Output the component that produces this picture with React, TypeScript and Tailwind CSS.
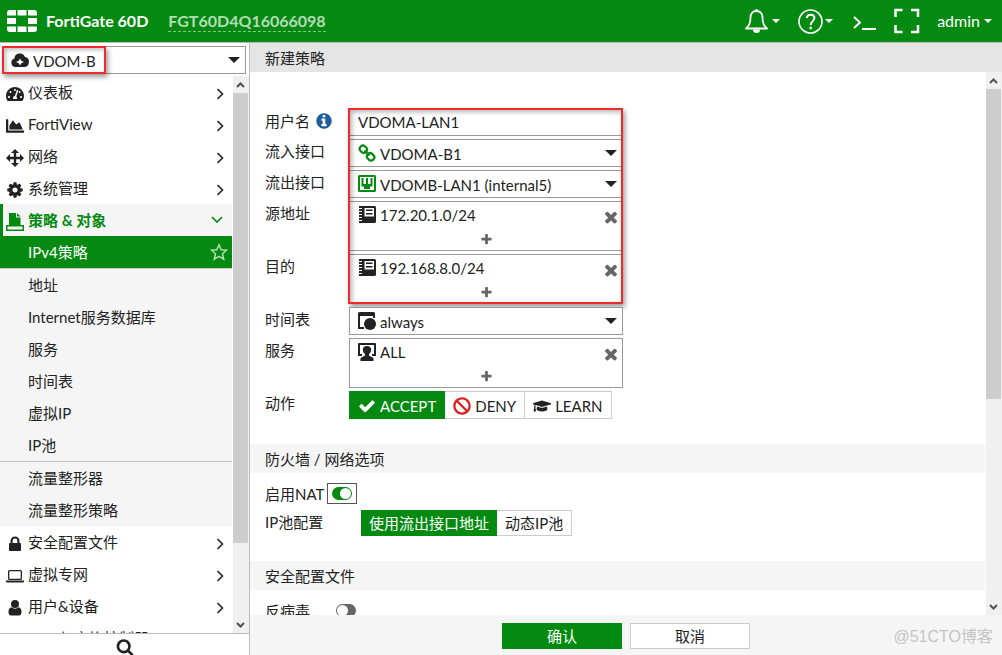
import { ReactNode, useState } from 'react'
import { FaBan, FaChartArea, FaGraduationCap, FaTachometerAlt } from 'react-icons/fa'

const FA = {
  cog: 'M1152 896q0-106-75-181t-181-75-181 75-75 181 75 181 181 75 181-75 75-181zm512-109v222q0 12-8 23t-20 13l-185 28q-19 54-39 91 35 50 107 138 10 12 10 25t-9 23q-27 37-99 108t-94 71q-12 0-26-9l-138-108q-44 23-91 38-16 136-29 186-7 28-36 28h-222q-14 0-24.5-8.5t-11.5-21.5l-28-184q-49-16-90-37l-141 107q-10 9-25 9-14 0-25-11-126-114-165-168-7-10-7-23 0-12 8-23 15-21 51-66.5t54-70.5q-27-50-41-99l-183-27q-13-2-21-12.5t-8-23.5v-222q0-12 8-23t19-13l186-28q14-46 39-92-40-57-107-138-10-12-10-24 0-10 9-23 26-36 98.5-107.5t94.5-71.5q13 0 26 10l138 107q44-23 91-38 16-136 29-186 7-28 36-28h222q14 0 24.5 8.5t11.5 21.5l28 184q49 16 90 37l142-107q9-9 24-9 13 0 25 10 129 119 165 170 7 8 7 22 0 12-8 23-15 21-51 66.5t-54 70.5q26 50 41 98l183 28q13 2 21 12.5t8 23.5z',
  search: 'M1216 832q0-185-131.5-316.5t-316.5-131.5-316.5 131.5-131.5 316.5 131.5 316.5 316.5 131.5 316.5-131.5 131.5-316.5zm512 832q0 52-38 90t-90 38q-54 0-90-38l-343-342q-179 124-399 124-143 0-273.5-55.5t-225-150-150-225-55.5-273.5 55.5-273.5 150-225 225-150 273.5-55.5 273.5 55.5 225 150 150 225 55.5 273.5q0 220-124 399l343 343q37 37 37 90z',
  times: 'M1490 1322q0 40-28 68l-136 136q-28 28-68 28t-68-28l-294-294-294 294q-28 28-68 28t-68-28l-136-136q-28-28-28-68t28-68l294-294-294-294q-28-28-28-68t28-68l136-136q28-28 68-28t68 28l294 294 294-294q28-28 68-28t68 28l136 136q28 28 28 68t-28 68l-294 294 294 294q28 28 28 68z',
  plus: 'M1600 736v192q0 40-28 68t-68 28h-416v416q0 40-28 68t-68 28h-192q-40 0-68-28t-28-68v-416h-416q-40 0-68-28t-28-68v-192q0-40 28-68t68-28h416v-416q0-40 28-68t68-28h192q40 0 68 28t28 68v416h416q40 0 68 28t28 68z',
  check: 'M1671 566q0 40-28 68l-724 724-136 136q-28 28-68 28t-68-28l-136-136-362-362q-28-28-28-68t28-68l136-136q28-28 68-28t68 28l294 295 656-657q28-28 68-28t68 28l136 136q28 28 28 68z',
  info: 'M1152 1376v-160q0-14-9-23t-23-9h-96v-512q0-14-9-23t-23-9h-320q-14 0-23 9t-9 23v160q0 14 9 23t23 9h96v320h-96q-14 0-23 9t-9 23v160q0 14 9 23t23 9h448q14 0 23-9t9-23zm-128-896v-160q0-14-9-23t-23-9h-192q-14 0-23 9t-9 23v160q0 14 9 23t23 9h192q14 0 23-9t9-23zm640 416q0 209-103 385.5t-279.5 279.5-385.5 103-385.5-103-279.5-279.5-103-385.5 103-385.5 279.5-279.5 385.5-103 385.5 103 279.5 279.5 103 385.5z',
}

function Fa({ d, size }: { d: string; size: number }) {
  return (
    <svg width={size} height={size} viewBox="0 0 1792 1792" fill="currentColor"><path d={d} /></svg>
  )
}

function Svg18({ children }: { children: ReactNode }) {
  return <svg width="18" height="18" viewBox="0 0 18 18" fill="currentColor">{children}</svg>
}

const ArrowsIcon = () => (
  <Svg18>
    <path d="M9 0l4 4h-2.8v3.8H14V5l4 4-4 4v-2.8h-3.800V14H13l-4 4-4-4h2.800v-3.800H4V13L0 9l4-4v2.800h3.800V4H5z" />
  </Svg18>
)

const PolicyIcon = () => (
  <Svg18>
    <path d="M3 0h7v4.500h4.500V12H3z" />
    <path d="M11 0l3.500 3.500H11z" />
    <path fillRule="evenodd" d="M0 12h18v6H0zM1.500 13.500v3h15v-3z" />
  </Svg18>
)

const LockIcon = () => (
  <Svg18>
    <path fillRule="evenodd" d="M4.500 8V6a4.500 4.500 0 0 1 9 0v2h.5a1 1 0 0 1 1 1v6a1 1 0 0 1-1 1H4a1 1 0 0 1-1-1V9a1 1 0 0 1 1-1zM6.600 8h4.800V6a2.400 2.400 0 0 0-4.800 0z" />
  </Svg18>
)

const LaptopIcon = () => (
  <Svg18>
    <path fillRule="evenodd" d="M3.500 3h11A1.500 1.500 0 0 1 16 4.500v7a1.500 1.500 0 0 1-1.500 1.500h-11A1.500 1.500 0 0 1 2 11.500v-7A1.500 1.500 0 0 1 3.500 3zM3.300 4.300v7.400h11.400V4.300z" />
    <path d="M0 13.500h18v1a1 1 0 0 1-1 1H1a1 1 0 0 1-1-1z" />
  </Svg18>
)

const UserIcon = () => (
  <Svg18>
    <circle cx="9" cy="5" r="4" />
    <path d="M5.500 8.300a5 5 0 0 0 7 0c2 .3 3 2 3 4.700 0 2-1 3.500-2.500 3.500H5c-1.500 0-2.500-1.500-2.500-3.500 0-2.700 1-4.400 3-4.700z" />
  </Svg18>
)

const CloudIcon = () => (
  <svg width="18" height="16" viewBox="0 0 18 16" fill="currentColor">
    <path d="M4.500 15A4.300 4.300 0 0 1 3.400 6.600 5.500 5.500 0 0 1 14 5a4.300 4.300 0 0 1 3.800 5.500c0 2.800-1.800 4.500-4.300 4.500z" />
    <path d="M9 6.500l1.200 2.300 2.800 1.200-2.800 1.200L9 13.500l-1.200-2.300L5 10l2.800-1.200z" fill="#fff" />
  </svg>
)

const LinkIcon = () => (
  <svg width="18" height="18" viewBox="0 0 18 18" fill="none" stroke="currentColor" strokeWidth="2.200">
    <rect x="1.600" y="2" width="7.500" height="6.400" rx="3" transform="rotate(45 5.300 5.200)" />
    <rect x="8.900" y="9.600" width="7.500" height="6.400" rx="3" transform="rotate(45 12.600 12.800)" />
    <path d="M6.500 6.500l5 5" />
  </svg>
)

const PortIcon = () => (
  <Svg18>
    <path fillRule="evenodd" d="M1.500 0h15A1.500 1.500 0 0 1 18 1.500v14a1.500 1.500 0 0 1-1.500 1.500h-15A1.500 1.500 0 0 1 0 15.500v-14A1.500 1.500 0 0 1 1.500 0zM2 2v13h14V2z" />
    <path d="M3.500 3h2v6H8V3h2v6h2.500V3h2v8.500H12V14H6v-2.500H3.500z" />
  </Svg18>
)

const AddressIcon = () => (
  <Svg18>
    <path fillRule="evenodd" d="M4 0h12.500A1.500 1.500 0 0 1 18 1.500v14a1.500 1.500 0 0 1-1.500 1.500H4zM6.500 2v8.500H16V2z" />
    <path d="M8 3.500h6.500V5H8zM8 7h6.500v1.500H8z" />
    <path d="M1 0h3v2H1zM1 3h3v2H1zM1 6h3v2H1zM1 9h3v2H1zM1 12h3v2H1zM1 15h3v2H1z" />
  </Svg18>
)

const ScheduleIcon = () => (
  <Svg18>
    <path d="M1.500 0h14A1.500 1.500 0 0 1 17 1.500V6h-2V4H2v11h4v2H0V1.500A1.500 1.500 0 0 1 1.500 0z" />
    <circle cx="12" cy="12" r="6" />
  </Svg18>
)

const ServiceIcon = () => (
  <Svg18>
    <path d="M1 0h16a1 1 0 0 1 1 1v12h-4v-2h2V2H2v9h2v2H0V1a1 1 0 0 1 1-1z" />
    <path d="M9 3c2.700 0 4.200 1.500 4.200 3.700S11.800 10.300 11 11v1.500l4.500 2.500v3h-13v-3L7 12.500V11c-.8-.7-2.200-2.100-2.200-4.300S6.300 3 9 3z" />
  </Svg18>
)

const Caret = () => (
  <svg width="8" height="4" viewBox="0 0 8 4" fill="currentColor"><path d="M0 0h8L4 4z" /></svg>
)

const SelectCaret = () => (
  <svg className="pointer-events-none absolute top-[11px] right-[6px]" width="12" height="6" viewBox="0 0 12 6" fill="currentColor"><path d="M0 0h12L6 6z" /></svg>
)

const Chevron = () => (
  <svg width="8" height="12" viewBox="0 0 8 12" fill="none" stroke="currentColor" strokeWidth="1.600"><path d="M1.500 1l5 5-5 5" /></svg>
)

function ScrollBar({ thumb }: { thumb: string }) {
  return (
    <div className="flex w-4 shrink-0 flex-col bg-[#f0f0f0] text-[#505050]">
      <svg className="shrink-0" width="15" height="17" viewBox="0 0 15 17" fill="none" stroke="currentColor" strokeWidth="2"><path d="M4 11l3.500-3.500L11 11" /></svg>
      <div className="min-h-0 grow">
        <div className={`mr-px bg-[#cdcdcd] ${thumb}`} />
      </div>
      <svg className="shrink-0" width="15" height="17" viewBox="0 0 15 17" fill="none" stroke="currentColor" strokeWidth="2"><path d="M4 7l3.500 3.500L11 7" /></svg>
    </div>
  )
}

function Header() {
  return (
    <header className="flex h-[43px] shrink-0 items-center border-b border-[#bbb] bg-[#048a10] pr-[10px] pl-[7px] text-base text-white">
      <svg width="30" height="22" viewBox="0 0 30 22" fill="#fff">
        <path d="M3 0h6v5.500H0V3a3 3 0 0 1 3-3zM10.500 0h9v5.500h-9zM21 0h6a3 3 0 0 1 3 3v2.500h-9zM0 8h9v6H0zM21 8h9v6h-9zM0 16.500h9V22H3a3 3 0 0 1-3-3zM10.500 16.500h9V22h-9zM21 16.500h9V19a3 3 0 0 1-3 3h-6z" />
      </svg>
      <span className="ml-[9px] font-bold">FortiGate 60D</span>
      <a href="#" className="ml-5 border-b border-dashed border-[#81c487] leading-5 font-bold text-[#b4dcb7]">FGT60D4Q16066098</a>
      <div className="ml-auto flex items-center">
        <button aria-label="通知" className="flex items-center gap-1">
          <svg width="23" height="26" viewBox="0 0 23 26" fill="none" stroke="currentColor" strokeWidth="1.800" strokeLinejoin="round">
            <path d="M11.500 3C7.500 3 5.500 6 5.500 9.500c0 6-1.500 8-4.500 11h21c-3-3-4.500-5-4.500-11C17.500 6 15.500 3 11.500 3z" />
            <path d="M11.500 3V1" />
            <path d="M8 21.500h7a3.500 3.500 0 0 1-7 0z" fill="currentColor" stroke="none" />
          </svg>
          <Caret />
        </button>
        <button aria-label="帮助" className="ml-[18px] flex items-center gap-[2px]">
          <svg width="25" height="25" viewBox="0 0 25 25" fill="none" stroke="currentColor" strokeWidth="1.600">
            <circle cx="12.500" cy="12.500" r="11.500" />
            <path d="M8.800 9.200C9 6.800 10.500 5.800 12.500 5.800s3.900 1.200 3.900 3.300c0 3-3.700 3.200-3.700 7" strokeWidth="2" />
            <circle cx="12.700" cy="19" r="1.400" fill="currentColor" stroke="none" />
          </svg>
          <Caret />
        </button>
        <button aria-label="CLI" className="mt-1 ml-5">
          <svg width="23" height="16" viewBox="0 0 23 16" fill="none" stroke="currentColor" strokeWidth="2"><path d="M1 2l6 5.500L1 13M9 14h14" /></svg>
        </button>
        <button aria-label="全屏" className="ml-[18px]">
          <svg width="26" height="26" viewBox="0 0 26 26" fill="none" stroke="currentColor" strokeWidth="2.500"><path d="M1.500 9V2h7M17 2h7v7M1.500 17v7h7M17 24h7v-7" /></svg>
        </button>
        <button className="ml-[17px] flex items-center gap-1">
          admin
          <Caret />
        </button>
      </div>
    </header>
  )
}

interface MenuRowProps {
  icon: ReactNode
  label: string
}

function MenuRow({ icon, label }: MenuRowProps) {
  return (
    <button className="flex h-8 w-full shrink-0 items-center pr-2 pl-[6px] text-left">
      <span className="mt-1 flex w-[18px] justify-center">{icon}</span>
      <span className="ml-1 grow">{label}</span>
      <span className="mt-1"><Chevron /></span>
    </button>
  )
}

function SubRow({ label }: { label: string }) {
  return <a href="#" className="flex h-8 shrink-0 items-center pl-7">{label}</a>
}

function Sidebar() {
  return (
    <aside className="flex w-[250px] shrink-0 flex-col border-r border-[#bbb]">
      <div className="relative mt-[3px] mr-[3px] mb-[2px] ml-[2px] shrink-0">
        <select aria-label="VDOM" className="h-7 w-full appearance-none border border-[#999] bg-white pt-[2px] pl-[30px]">
          <option>VDOM-B</option>
        </select>
        <span className="pointer-events-none absolute top-[6px] left-[9px]"><CloudIcon /></span>
        <SelectCaret />
        <div className="pointer-events-none absolute inset-y-0 left-0 w-[104px] border-2 border-[#ee2a2a] shadow-[2px_3px_5px_rgba(0,0,0,0.4),inset_2px_2px_4px_rgba(0,0,0,0.25)]" />
      </div>
      <div className="flex min-h-0 grow">
        <nav className="mr-px flex grow flex-col overflow-hidden">
          <MenuRow icon={<FaTachometerAlt size={18} />} label="仪表板" />
          <MenuRow icon={<FaChartArea size={18} />} label="FortiView" />
          <MenuRow icon={<ArrowsIcon />} label="网络" />
          <MenuRow icon={<Fa d={FA.cog} size={18} />} label="系统管理" />
          <div className="flex shrink-0 flex-col bg-[#f5f5f5]">
            <button className="flex h-8 items-center border-l-[3px] border-[#048a10] pr-[9px] pl-[3px] text-left font-bold text-[#048a10]">
              <span className="mt-1"><PolicyIcon /></span>
              <span className="ml-1 grow">策略 &amp; 对象</span>
              <svg width="12" height="8" viewBox="0 0 12 8" fill="none" stroke="currentColor" strokeWidth="1.600"><path d="M1 1l5 5 5-5" /></svg>
            </button>
            <a href="#" className="flex h-8 items-center justify-between bg-[#048a10] pr-1 pl-7 text-white">
              IPv4策略
              <svg width="18" height="18" viewBox="0 0 18 18" fill="none" stroke="#b4dcb7" strokeWidth="1.500"><path d="M9 1.800l2.200 4.900 5.300.5-4 3.600 1.200 5.300L9 13.300l-4.700 2.800 1.200-5.300-4-3.600 5.300-.5z" /></svg>
            </a>
            <div className="border-t border-[#c4c4c4]">
              <SubRow label="地址" />
              <SubRow label="Internet服务数据库" />
              <SubRow label="服务" />
              <SubRow label="时间表" />
              <SubRow label="虚拟IP" />
              <SubRow label="IP池" />
            </div>
            <div className="border-t border-[#c4c4c4]">
              <SubRow label="流量整形器" />
              <SubRow label="流量整形策略" />
            </div>
          </div>
          <MenuRow icon={<LockIcon />} label="安全配置文件" />
          <MenuRow icon={<LaptopIcon />} label="虚拟专网" />
          <MenuRow icon={<UserIcon />} label="用户&设备" />
          <MenuRow icon={null} label="WiFi与交换控制器" />
        </nav>
        <ScrollBar thumb="h-[86%]" />
      </div>
      <button aria-label="搜索" className="flex h-[22px] shrink-0 justify-center overflow-hidden border-t border-[#bbb] pt-1">
        <Fa d={FA.search} size={18} />
      </button>
    </aside>
  )
}

interface FieldRowProps {
  label: string
  htmlFor?: string
  info?: boolean
  children: ReactNode
}

function FieldRow({ label, htmlFor, info, children }: FieldRowProps) {
  return (
    <div className="flex items-start">
      <label htmlFor={htmlFor} className={`flex w-[84px] shrink-0 items-center ${info ? 'h-[26px]' : 'h-6'}`}>
        {label}
        {info && <span className="ml-[5px] text-[#1f5f99]"><Fa d={FA.info} size={18} /></span>}
      </label>
      {children}
    </div>
  )
}

function SelectField({ id, icon, value }: { id: string; icon: ReactNode; value: string }) {
  return (
    <div className="relative w-[274px]">
      <select id={id} className="h-7 w-full appearance-none border border-[#999] bg-white pt-[2px] pl-[30px]">
        <option>{value}</option>
      </select>
      <span className="pointer-events-none absolute top-[5px] left-[9px]">{icon}</span>
      <SelectCaret />
    </div>
  )
}

function MultiField({ icon, value }: { icon: ReactNode; value: string }) {
  return (
    <div className="h-[50px] w-[274px] border border-[#999] bg-white">
      <div className="flex h-[26px] items-center pr-[2px] pl-2">
        {icon}
        <span className="ml-1 grow">{value}</span>
        <button aria-label={`删除 ${value}`} className="mt-1 text-[#666]"><Fa d={FA.times} size={18} /></button>
      </div>
      <button aria-label="添加" className="flex h-[22px] w-full items-center justify-center text-[#666]"><Fa d={FA.plus} size={13} /></button>
    </div>
  )
}

const ACTIONS = [
  { name: 'ACCEPT', icon: <Fa d={FA.check} size={18} /> },
  { name: 'DENY', icon: <FaBan size={18} className="text-[#d9201f]" /> },
  { name: 'LEARN', icon: <FaGraduationCap size={18} /> },
]

function SectionTitle({ children }: { children: ReactNode }) {
  return <h2 className="mt-[25px] mr-px flex h-[29px] items-center bg-[#f5f5f5] px-[15px]">{children}</h2>
}

function PolicyForm() {
  const [action, setAction] = useState('ACCEPT')
  const [pool, setPool] = useState('使用流出接口地址')

  return (
    <form className="min-w-0 grow overflow-hidden pt-9" onSubmit={e => e.preventDefault()}>
      <div className="flex flex-col gap-[3px] px-[15px]">
        <div className="relative flex flex-col gap-[3px]">
          <FieldRow label="用户名" htmlFor="name" info>
            <input id="name" defaultValue="VDOMA-LAN1" className="h-7 w-[274px] border border-[#999] px-2" />
          </FieldRow>
          <FieldRow label="流入接口" htmlFor="srcintf">
            <SelectField id="srcintf" icon={<span className="text-[#048a10]"><LinkIcon /></span>} value="VDOMA-B1" />
          </FieldRow>
          <FieldRow label="流出接口" htmlFor="dstintf">
            <SelectField id="dstintf" icon={<span className="text-[#048a10]"><PortIcon /></span>} value="VDOMB-LAN1 (internal5)" />
          </FieldRow>
          <FieldRow label="源地址">
            <MultiField icon={<AddressIcon />} value="172.20.1.0/24" />
          </FieldRow>
          <FieldRow label="目的">
            <MultiField icon={<AddressIcon />} value="192.168.8.0/24" />
          </FieldRow>
          <div className="pointer-events-none absolute top-0 bottom-0 left-[83px] w-[275px] border-2 border-[#ee2a2a] shadow-[2px_3px_5px_rgba(0,0,0,0.4),inset_2px_2px_5px_rgba(0,0,0,0.3)]" />
        </div>
        <FieldRow label="时间表" htmlFor="schedule">
          <SelectField id="schedule" icon={<ScheduleIcon />} value="always" />
        </FieldRow>
        <FieldRow label="服务">
          <MultiField icon={<ServiceIcon />} value="ALL" />
        </FieldRow>
        <FieldRow label="动作">
          <div className="flex">
            {ACTIONS.map(a => (
              <button
                key={a.name}
                type="button"
                onClick={() => setAction(a.name)}
                className={`flex h-7 items-center gap-1 border px-2 pt-[2px] ${action === a.name ? 'border-[#048a10] bg-[#048a10] text-white' : 'border-l-0 border-[#ccc] bg-white'}`}
              >
                {a.icon}
                {a.name}
              </button>
            ))}
          </div>
        </FieldRow>
      </div>

      <SectionTitle>防火墙 / 网络选项</SectionTitle>
      <div className="mt-[10px] flex h-[21px] items-center px-[15px]">
        <label htmlFor="nat">启用NAT</label>
        <span className="ml-[3px] flex h-[21px] w-[30px] items-center justify-center border border-[#555]">
          <input id="nat" type="checkbox" defaultChecked className="relative h-[13px] w-5 appearance-none rounded-full bg-[#666] before:absolute before:top-px before:left-px before:size-[11px] before:rounded-full before:bg-white checked:bg-[#048a10] checked:before:left-2" />
        </span>
      </div>
      <div className="mt-[6px] flex px-[15px]">
        <span className="flex h-6 w-24 items-center">IP池配置</span>
        {['使用流出接口地址', '动态IP池'].map(p => (
          <button
            key={p}
            type="button"
            onClick={() => setPool(p)}
            className={`h-[26px] border ${pool === p ? 'border-[#048a10] bg-[#048a10] px-[7px] text-white' : 'border-l-0 border-[#ccc] bg-white px-2'}`}
          >
            {p}
          </button>
        ))}
      </div>

      <SectionTitle>安全配置文件</SectionTitle>
      <div className="mt-[10px] flex h-[21px] items-center px-[15px]">
        <label htmlFor="av" className="w-[71px]">反病毒</label>
        <input id="av" type="checkbox" className="relative h-[13px] w-5 appearance-none rounded-full bg-[#666] before:absolute before:top-px before:left-px before:size-[11px] before:rounded-full before:bg-white checked:bg-[#048a10] checked:before:left-2" />
      </div>
    </form>
  )
}

export default function App() {
  return (
    <div className="flex h-screen flex-col overflow-hidden bg-white font-[Lato,'Noto_Sans_CJK_SC',sans-serif] text-[15px] leading-5 text-[#222]">
      <Header />
      <div className="flex min-h-0 grow">
        <Sidebar />
        <main className="flex min-w-0 grow flex-col">
          <h1 className="flex h-[29px] shrink-0 items-center bg-[#e5e5e5] px-[15px]">新建策略</h1>
          <div className="flex min-h-0 grow">
            <PolicyForm />
            <ScrollBar thumb="h-[61%]" />
          </div>
          <footer className="relative flex h-10 shrink-0 items-center justify-center gap-2 bg-[#f5f5f5] pt-[2px]">
            <button className="h-[26px] w-[120px] bg-[#048a10] text-white">确认</button>
            <button className="h-[26px] w-[120px] border border-[#ccc] bg-white">取消</button>
            <span className="absolute right-[9px] bottom-2 font-['Liberation_Sans','Noto_Sans_CJK_SC',sans-serif] text-base leading-5 text-[#c4c4c4]">@51CTO博客</span>
          </footer>
        </main>
      </div>
    </div>
  )
}
